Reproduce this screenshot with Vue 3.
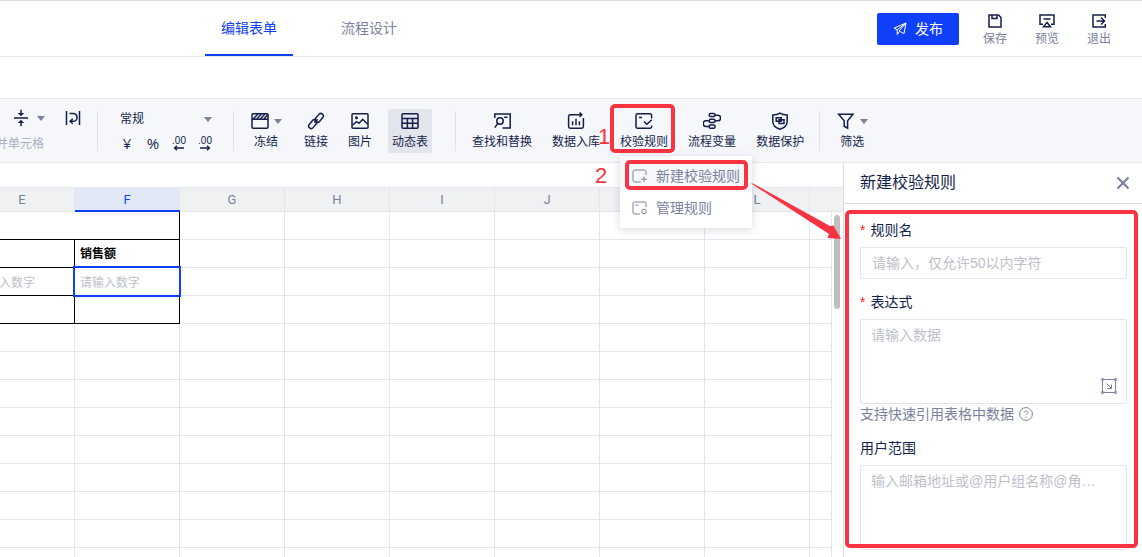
<script setup>
import { ref } from 'vue'

const columns = ['E', 'F', 'G', 'H', 'I', 'J', 'K', 'L', '']
const emptyRows = 9
const format = ref('常规')
const tools = [
  [
    { label: '冻结', icon: 'freeze', caret: true, wide: true },
    { label: '链接', icon: 'link' },
    { label: '图片', icon: 'image' },
    { label: '动态表', icon: 'table', active: true }
  ],
  [
    { label: '查找和替换', icon: 'find' },
    { label: '数据入库', icon: 'store' },
    { label: '校验规则', icon: 'rule', menu: true },
    { label: '流程变量', icon: 'flow' },
    { label: '数据保护', icon: 'shield' }
  ],
  [{ label: '筛选', icon: 'filter', caret: true }]
]
const icons = {
  freeze: '<rect x="1" y="1.800" width="16" height="14.400" rx="1"/><path d="M1 7.200h16M2.500 6.800l4.400-4.800M6 6.800l4.400-4.800M9.500 6.800l4.400-4.800M13 6.800l3.700-4.100"/>',
  link: '<rect x="7.2" y="3.4" width="10" height="5" rx="2.5" transform="rotate(-50 12.2 5.9)"/><rect x="0.8" y="9.6" width="10" height="5" rx="2.5" transform="rotate(-50 5.8 12.1)"/><path d="M7.400 10.800l3.200-3.600"/>',
  image: '<rect x="1" y="1.8" width="16" height="14.4" rx="1"/><path d="M1.5 13.200l4-3.600 2.600 1.700 3.600-4 5 5"/><circle cx="5.5" cy="5.8" r=".8"/>',
  table: '<rect x="1" y="1.8" width="16" height="14.4" rx="1"/><path d="M1 6.600h16M1 11.200h16M6.400 6.600v9.600M11.600 6.600v9.600"/>',
  find: '<path d="M1.800 6V2h15.400v14H9.500"/><circle cx="7" cy="9" r="3.2"/><path d="M4.700 11.400L1.800 15.600M11.200 5.300h3.200"/>',
  store: '<path d="M9.500 2.800H3.200a1.600 1.600 0 0 0-1.600 1.600v10.200a1.600 1.600 0 0 0 1.600 1.600h11.600a1.600 1.600 0 0 0 1.600-1.600V6M9.500 2.800h5M12.600.6l2.200 2.200L12.600 5M5.600 9.200v4M9 6.700v6.500M12.400 9.200v4"/>',
  rule: '<path d="M16.600 6.500V3.300a1.500 1.500 0 0 0-1.500-1.500H2.500A1.500 1.500 0 0 0 1 3.300v11.400a1.500 1.500 0 0 0 1.500 1.500h12.600a1.500 1.500 0 0 0 1.500-1.500v-1.200M4 5.500h3M8.800 9.500l3 2.800 5-4.500"/>',
  flow: '<rect x="6.2" y="1.6" width="5.8" height="3" rx="1.3"/><rect x="6.2" y="7.2" width="5.8" height="3.2" rx="1.3"/><rect x="6.2" y="13" width="5.8" height="3.2" rx="1.3"/><path d="M12 3.200h2.800a2.800 2.800 0 0 1 0 5.600H12M6.200 8.800H3.100a2.900 2.900 0 0 0 0 5.800h3.100"/>',
  shield: '<path d="M9 1.200c2 1.300 4.600 1.800 7.200 1.800v6.400c0 4-3.200 6.400-7.200 7.800-4-1.400-7.200-3.800-7.200-7.800V3C4.400 3 7 2.500 9 1.200z"/><path d="M5.200 5.700h5v3.600h-5zM8 7.800h5v3.800H8z"/>',
  filter: '<path d="M1.600 2.200h14.400l-5.400 6.600v7.400l-3.400-2V8.800z"/>'
}
</script>

<template>
  <div class="page">
    <header class="top">
      <nav class="tabs">
        <a href="#form" class="tab current">编辑表单</a>
        <a href="#flow" class="tab">流程设计</a>
      </nav>
      <div class="actions">
        <button class="publish">
          <svg width="14" height="14" viewBox="0 0 14 14" fill="none" stroke="currentColor" stroke-linejoin="round"><path d="M13 1L1 6.200l3.200 1.600L13 1l-2 10.600-3.600-1.900M4.200 7.800V12.500l2-2.800M13 1L6 9l1.400.7" /></svg>
          发布
        </button>
        <button class="act">
          <svg width="16" height="16" viewBox="0 0 16 16"><path d="M2 2h9.500L14 4.500V14H2zM5 2v3.500h5V2" /></svg>
          保存
        </button>
        <button class="act">
          <svg width="16" height="16" viewBox="0 0 16 16"><path d="M4 11.300H1V2h14v9.300h-3M4.500 6h7M8 9.500l-3.500 4.300h7z" /></svg>
          预览
        </button>
        <button class="act">
          <svg width="16" height="16" viewBox="0 0 16 16"><path d="M14.300 5V2H2v12h12.300v-3M5.500 8h8M10 4.500L13.500 8 10 11.500" /></svg>
          退出
        </button>
      </div>
    </header>

    <div class="toolbar">
      <div class="cells">
        <div class="cells-row">
          <button class="plain" aria-label="垂直对齐">
            <svg class="ico" viewBox="0 0 18 18"><path d="M2 9h14M9 .8v5M9 17.200v-5" /><path class="solid" d="M5.800 4h6.400L9 7.300zM5.800 14h6.400L9 10.700z" /></svg>
            <i class="caret"></i>
          </button>
          <button class="plain" aria-label="自动换行">
            <svg class="ico" viewBox="0 0 18 18"><path d="M2.500 2v14M15.500 2v14M5.500 4.500h3.700a3.800 3.800 0 0 1 0 7.800H7M8.800 9.800l-2.700 2.500 2.700 2.500" /></svg>
          </button>
        </div>
        <button class="plain merge">合并单元格</button>
      </div>
      <i class="sep"></i>
      <div class="numbers">
        <label class="pick">
          <select v-model="format" aria-label="数字格式"><option>常规</option></select>
          <i class="caret"></i>
        </label>
        <div class="number-row">
          <button class="plain num">¥</button>
          <button class="plain num">%</button>
          <button class="plain dec">.00<svg width="12" height="6" viewBox="0 0 12 6"><path d="M1.500 3H11M4 .8L1.500 3 4 5.200" /></svg></button>
          <button class="plain dec">.00<svg width="12" height="6" viewBox="0 0 12 6"><path d="M1 3h9.500M8 .8L10.500 3 8 5.200" /></svg></button>
        </div>
      </div>
      <template v-for="(group, g) in tools" :key="g">
        <i class="sep" :class="{ tight: g === 2 }"></i>
        <div class="group">
          <div v-for="t in group" :key="t.label" class="slot" :class="{ wide: t.wide }">
            <button class="tool" :class="{ active: t.active }">
              <span class="pic">
                <svg class="ico" viewBox="0 0 18 18" v-html="icons[t.icon]"></svg>
                <i v-if="t.caret" class="caret"></i>
              </span>
              {{ t.label }}
            </button>
            <template v-if="t.menu">
              <div class="menu">
                <button class="item hover">
                  <svg width="16" height="16" viewBox="0 0 16 16"><path d="M9 14H2.500A1.500 1.500 0 0 1 1 12.500v-9A1.500 1.500 0 0 1 2.500 2h10A1.500 1.500 0 0 1 14 3.500V7M12 8.500v5.500M9.300 11.200h5.700" /></svg>
                  新建校验规则
                </button>
                <button class="item">
                  <svg width="16" height="16" viewBox="0 0 16 16"><path d="M8 14H2.500A1.500 1.500 0 0 1 1 12.500v-9A1.500 1.500 0 0 1 2.500 2h10A1.500 1.500 0 0 1 14 3.500V7M3.500 5h3" /><circle cx="12" cy="11.500" r="2.300" /></svg>
                  管理规则
                </button>
              </div>
              <b class="step one">1</b>
              <b class="step two">2</b>
              <i class="mark mark-tool"></i>
              <i class="mark mark-item"></i>
              <svg class="arrow" width="92" height="58" viewBox="0 0 92 58"><path d="M1 1.500L3 1.500 80 44l3.500-.5L91 57l-13.500-1 1.500-4z" /></svg>
            </template>
          </div>
        </div>
      </template>
    </div>

    <main class="work">
      <section class="sheet">
        <div class="formula"></div>
        <div class="grid">
          <table>
            <thead>
              <tr><th v-for="(c, i) in columns" :key="i" :class="{ picked: c === 'F' }">{{ c }}</th></tr>
            </thead>
            <tbody>
              <tr><td colspan="2" class="ink"></td><td v-for="n in 7" :key="n"></td></tr>
              <tr><td class="ink"></td><td class="ink name">销售额</td><td v-for="n in 7" :key="n"></td></tr>
              <tr>
                <td class="ink"><input placeholder="请输入数字" aria-label="E3" /></td>
                <td class="ink focus"><input placeholder="请输入数字" aria-label="F3" /></td>
                <td v-for="n in 7" :key="n"></td>
              </tr>
              <tr><td class="ink"></td><td class="ink"></td><td v-for="n in 7" :key="n"></td></tr>
              <tr v-for="r in emptyRows" :key="r"><td v-for="(c, i) in columns" :key="i"></td></tr>
            </tbody>
          </table>
          <div class="track"><div class="thumb"></div></div>
        </div>
      </section>

      <aside class="panel">
        <div class="panel-head">
          <h2>新建校验规则</h2>
          <button class="plain" aria-label="关闭"><svg width="14" height="14" viewBox="0 0 14 14"><path d="M1.500 1.500l11 11M12.500 1.500l-11 11" /></svg></button>
        </div>
        <form class="panel-body" @submit.prevent>
          <label for="rule-name"><em>*</em>规则名</label>
          <input id="rule-name" class="field" placeholder="请输入，仅允许50以内字符" />
          <label for="rule-expr"><em>*</em>表达式</label>
          <div class="expr">
            <textarea id="rule-expr" class="field area" placeholder="请输入数据"></textarea>
            <button type="button" class="plain expand" aria-label="选择区域">
              <svg width="18" height="18" viewBox="0 0 18 18"><path d="M2.500 2.500h13v13h-13zM6.500 6.500l5 5M11.500 7.500v4h-4" /><circle cx="2.500" cy="2.500" r="1.200" /><circle cx="15.500" cy="2.500" r="1.200" /><circle cx="2.500" cy="15.500" r="1.200" /><circle cx="15.500" cy="15.500" r="1.200" /></svg>
            </button>
          </div>
          <p class="hint">支持快速引用表格中数据
            <svg width="14" height="14" viewBox="0 0 14 14"><circle cx="7" cy="7" r="6.400" /><path d="M5.200 5.600c0-2.300 3.600-2.300 3.600 0 0 1.200-1.800 1.300-1.800 2.600M7 9.500v1" /></svg>
          </p>
          <label for="rule-users">用户范围</label>
          <textarea id="rule-users" class="field area" placeholder="输入邮箱地址或@用户组名称@角…"></textarea>
          <i class="mark mark-form"></i>
        </form>
      </aside>
    </main>
  </div>
</template>

<style>
body {
  margin: 0;
}
</style>

<style scoped>
.page {
  display: flex;
  flex-direction: column;
  height: 100vh;
  overflow: hidden;
  box-sizing: border-box;
  border-top: 1px solid #d9d9d9;
  background: #fff;
  color: #141e4b;
  font: 14px/20px "Liberation Sans", "Noto Sans CJK SC", sans-serif;
}
button,
input,
select,
textarea {
  font: inherit;
  color: inherit;
  margin: 0;
  border: 0;
  padding: 0;
  background: none;
  box-sizing: border-box;
  border-radius: 0;
}
button,
select {
  cursor: pointer;
}
svg {
  fill: none;
  stroke: currentColor;
  flex: none;
  display: block;
}
.top {
  display: flex;
  justify-content: space-between;
  height: 55px;
  flex: none;
  border-bottom: 1px solid #e6e7ef;
  padding: 0 31px 0 205px;
}
.tabs {
  display: flex;
  gap: 32px;
}
.tab {
  padding: 0 16px;
  line-height: 54px;
  height: 53px;
  color: #7b819d;
  text-decoration: none;
}
.tab.current {
  color: #103ffa;
  border-bottom: 2px solid #103ffa;
}
.actions {
  display: flex;
  align-items: flex-start;
  gap: 28px;
  padding-top: 12px;
}
.publish {
  display: flex;
  align-items: center;
  justify-content: center;
  gap: 8px;
  width: 82px;
  height: 32px;
  margin-right: -4px;
  border-radius: 2px;
  background: #103ffa;
  color: #fff;
}
.act {
  display: flex;
  flex-direction: column;
  align-items: center;
  gap: 2px;
  font-size: 12px;
  line-height: 16px;
  color: #7b819d;
}
.act svg {
  color: #141e4b;
  stroke-width: 1.5;
}
.toolbar {
  display: flex;
  align-items: flex-start;
  flex: none;
  height: 53px;
  margin-top: 41px;
  padding-top: 10px;
  border: solid #e6e7ef;
  border-width: 1px 0;
  background: #f6f7fb;
  font-size: 12px;
  line-height: 16px;
  white-space: nowrap;
}
.ico {
  width: 18px;
  height: 18px;
  stroke-width: 1.5;
}
.solid {
  fill: currentColor;
  stroke: none;
}
.caret {
  flex: none;
  border: solid transparent;
  border-width: 5px 4px 0;
  border-top-color: #7b819d;
}
.plain {
  display: flex;
  align-items: center;
}
.cells {
  width: 82px;
}
.cells-row {
  display: flex;
  justify-content: space-between;
  padding-left: 12px;
}
.cells-row .plain {
  gap: 7px;
}
.merge {
  margin: 9px 0 0 -16px;
  color: #a9adbf;
}
.sep {
  flex: none;
  width: 1px;
  height: 40px;
  margin: 2px 16px 0 19px;
  background: #e1e3ec;
}
.cells + .sep {
  margin: 2px 20px 0 15px;
}
.group + .sep {
  margin: 2px 12px 0 23px;
}
.group + .sep.tight {
  margin: 2px 16px 0 11px;
}
.pick {
  display: flex;
  align-items: center;
  width: 94px;
  height: 20px;
}
.pick select {
  flex: 1;
  padding-left: 2px;
  appearance: none;
  line-height: 18px;
}
.number-row {
  display: flex;
  gap: 8px;
  margin-top: 6px;
}
.num,
.dec {
  justify-content: center;
  width: 18px;
  height: 16px;
}
.num {
  font-family: "Open Sans", sans-serif;
  font-size: 15px;
}
.dec {
  flex-direction: column;
  font-size: 10px;
  line-height: 9px;
}
.dec svg {
  stroke-width: 1.3;
}
.group {
  display: flex;
  gap: 12px;
}
.slot {
  position: relative;
}
.wide {
  margin-right: 6px;
}
.tool {
  display: flex;
  flex-direction: column;
  align-items: center;
  gap: 4px;
  padding: 3px 4px;
  border-radius: 3px;
}
.tool.active {
  background: #e3e5ed;
}
.pic {
  display: flex;
  align-items: center;
  gap: 5px;
  margin: 0 -4px;
}
.menu {
  position: absolute;
  z-index: 2;
  left: 4px;
  top: 47px;
  width: 132px;
  padding: 4px 0;
  box-sizing: border-box;
  border-radius: 2px;
  background: #fff;
  box-shadow: 0 2px 10px rgba(20, 30, 75, 0.16);
}
.item {
  display: flex;
  align-items: center;
  gap: 8px;
  width: 100%;
  height: 32px;
  padding-left: 12px;
  font-size: 14px;
  color: #7b819d;
}
.item.hover {
  background: #f6f7fb;
}
.mark {
  position: absolute;
  z-index: 3;
  box-sizing: border-box;
  border: 4px solid #f93341;
  border-radius: 5px;
  pointer-events: none;
}
.mark-tool {
  left: -6px;
  right: -3px;
  top: -5px;
  height: 49px;
}
.mark-item {
  left: 9px;
  top: 51px;
  width: 123px;
  height: 30px;
}
.mark-form {
  inset: 6px 4px 2px 1px;
}
.step {
  position: absolute;
  z-index: 3;
  color: #f93341;
  font: 22px/24px "Liberation Sans", sans-serif;
}
.one {
  left: -18px;
  top: 16px;
}
.two {
  left: -21px;
  top: 55px;
}
.arrow {
  position: absolute;
  z-index: 4;
  left: 134px;
  top: 73px;
  fill: #f93341;
  stroke: none;
  pointer-events: none;
}
.work {
  display: flex;
  flex: 1;
  min-height: 0;
}
.sheet {
  flex: 1;
  min-width: 0;
  display: flex;
  flex-direction: column;
}
.formula {
  flex: none;
  height: 24px;
  border-bottom: 1px solid #e6e7ef;
}
.grid {
  position: relative;
  flex: 1;
  min-height: 0;
  overflow: hidden;
  background: linear-gradient(#f0f1f3 24px, #fff 24px);
}
table {
  width: 945px;
  margin-left: -30px;
  table-layout: fixed;
  border-collapse: separate;
  border-spacing: 0;
}
th,
td {
  box-sizing: border-box;
  border: solid #e4e5ed;
  border-width: 0 1px 1px 0;
  padding: 0;
}
th {
  height: 24px;
  background: #f0f1f3;
  color: #7b819d;
  font: 13px/22px Roboto, sans-serif;
}
th.picked {
  position: relative;
  background: #e2e8f6;
  border-right-color: #e2e8f6;
  color: #103ffa;
}
th.picked::after {
  content: "";
  position: absolute;
  inset: auto -1px -1px 0;
  height: 2px;
  background: #103ffa;
}
td {
  height: 28px;
  font-size: 12px;
  line-height: 16px;
}
td.ink {
  border-color: #000;
}
.name {
  padding-left: 5px;
  color: #000;
  font-weight: bold;
}
td input {
  display: block;
  width: 100%;
  height: 20px;
  padding: 2px 0 0 5px;
}
.focus {
  position: relative;
}
.focus::after {
  content: "";
  position: absolute;
  inset: -2px;
  border: 2px solid #103ffa;
  pointer-events: none;
}
::placeholder {
  color: #bdbfcb;
  opacity: 1;
}
.track {
  position: absolute;
  top: 24px;
  right: 0;
  bottom: 0;
  width: 12px;
  box-sizing: border-box;
  border-left: 1px solid #e4e5ed;
  padding: 3px 3px 0 2px;
  background: #fff;
}
.thumb {
  height: 94px;
  border-radius: 3px;
  background: #bfbfbf;
}
.panel {
  flex: 0 0 299px;
  box-sizing: border-box;
  border-left: 1px solid #dcdde3;
}
.panel-head {
  display: flex;
  align-items: center;
  justify-content: space-between;
  height: 40px;
  padding: 0 12px 0 16px;
  border-bottom: 1px solid #dcdde3;
}
h2 {
  margin: 0;
  font-size: 16px;
  line-height: 24px;
  font-weight: normal;
}
.panel-head svg {
  color: #7b819d;
  stroke-width: 2.2;
}
.panel-body {
  position: relative;
  display: flex;
  flex-direction: column;
  padding: 16px 15px 0 16px;
}
.panel-body label {
  margin-bottom: 7px;
}
em {
  margin-right: 5px;
  color: #f5222d;
  font-style: normal;
}
.field {
  display: block;
  width: 100%;
  height: 32px;
  border: 1px solid #e4e5ed;
  border-radius: 2px;
  padding: 0 11px;
}
.field + label {
  margin-top: 13px;
}
.area {
  height: 85px;
  padding: 5px 10px;
  resize: none;
  overflow: hidden;
}
.expr {
  position: relative;
}
.expand {
  position: absolute;
  right: 9px;
  bottom: 9px;
  color: #7b819d;
}
.hint {
  display: flex;
  align-items: center;
  gap: 5px;
  margin: 0 0 14px;
  color: #7b819d;
}
</style>
